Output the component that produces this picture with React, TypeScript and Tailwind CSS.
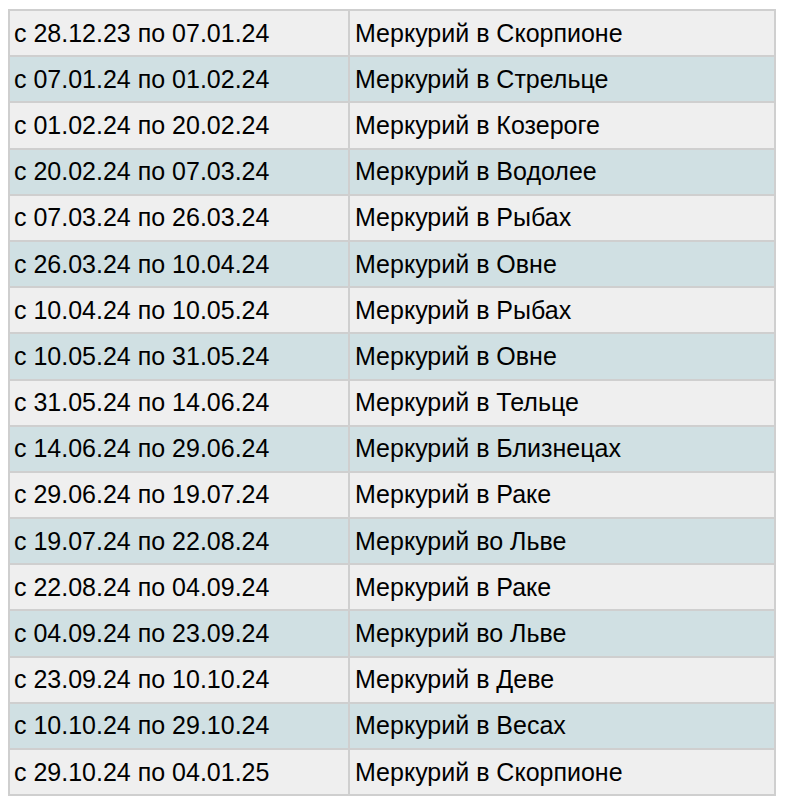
const rows: [string, string][] = [
  ["с 28.12.23 по 07.01.24", "Меркурий в Скорпионе"],
  ["с 07.01.24 по 01.02.24", "Меркурий в Стрельце"],
  ["с 01.02.24 по 20.02.24", "Меркурий в Козероге"],
  ["с 20.02.24 по 07.03.24", "Меркурий в Водолее"],
  ["с 07.03.24 по 26.03.24", "Меркурий в Рыбах"],
  ["с 26.03.24 по 10.04.24", "Меркурий в Овне"],
  ["с 10.04.24 по 10.05.24", "Меркурий в Рыбах"],
  ["с 10.05.24 по 31.05.24", "Меркурий в Овне"],
  ["с 31.05.24 по 14.06.24", "Меркурий в Тельце"],
  ["с 14.06.24 по 29.06.24", "Меркурий в Близнецах"],
  ["с 29.06.24 по 19.07.24", "Меркурий в Раке"],
  ["с 19.07.24 по 22.08.24", "Меркурий во Льве"],
  ["с 22.08.24 по 04.09.24", "Меркурий в Раке"],
  ["с 04.09.24 по 23.09.24", "Меркурий во Льве"],
  ["с 23.09.24 по 10.10.24", "Меркурий в Деве"],
  ["с 10.10.24 по 29.10.24", "Меркурий в Весах"],
  ["с 29.10.24 по 04.01.25", "Меркурий в Скорпионе"],
];

export default function App() {
  return (
    <div className="min-h-screen bg-white pl-2 pt-[9px] font-['Liberation_Sans',Arial,sans-serif] text-black">
      <table className="w-[768px] border-collapse border-2 border-[#cfcfcf] text-[25px] leading-none">
        <tbody>
          {rows.map(([period, sign], i) => (
            <tr key={i} className={i % 2 === 0 ? "bg-[#efefef]" : "bg-[#d0e0e3]"}>
              <td className="h-[46.2px] w-[340px] border-2 border-[#cfcfcf] pl-1 align-middle">
                {period}
              </td>
              <td className="h-[46.2px] border-2 border-[#cfcfcf] pl-[5px] align-middle">
                {sign}
              </td>
            </tr>
          ))}
        </tbody>
      </table>
    </div>
  );
}
